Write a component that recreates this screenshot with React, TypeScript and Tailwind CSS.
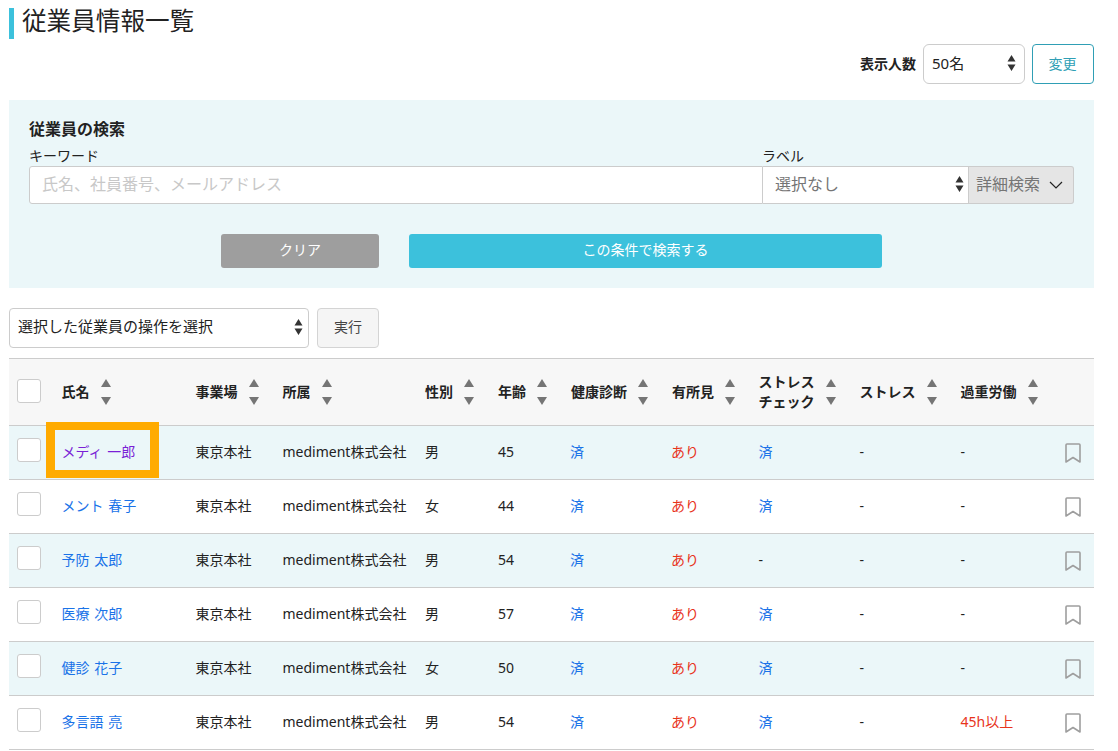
import { ReactNode } from 'react';

interface Employee {
  name: string;
  gender: string;
  age: number;
  stressCheck: string;
  overwork: string;
  visited?: boolean;
}

const employees: Employee[] = [
  { name: 'メディ 一郎', gender: '男', age: 45, stressCheck: '済', overwork: '-', visited: true },
  { name: 'メント 春子', gender: '女', age: 44, stressCheck: '済', overwork: '-' },
  { name: '予防 太郎', gender: '男', age: 54, stressCheck: '-', overwork: '-' },
  { name: '医療 次郎', gender: '男', age: 57, stressCheck: '済', overwork: '-' },
  { name: '健診 花子', gender: '女', age: 50, stressCheck: '済', overwork: '-' },
  { name: '多言語 亮', gender: '男', age: 54, stressCheck: '済', overwork: '45h以上' },
];

function SelectArrows() {
  return (
    <svg width="9" height="18" viewBox="0 0 9 18" className="shrink-0">
      <path d="M4.5 1 L8.5 7.5 H0.5 Z M0.5 10.5 H8.5 L4.5 17 Z" fill="#333" />
    </svg>
  );
}

function SortArrows() {
  return (
    <svg width="10" height="26" viewBox="0 0 10 26" className="shrink-0">
      <path d="M5 0 L10 8 H0 Z M0 18 H10 L5 26 Z" fill="#757575" />
    </svg>
  );
}

function Checkbox({ lift }: { lift: string }) {
  return <div className={`h-6 w-6 rounded-[3px] border border-[#ccc] bg-white ${lift}`} />;
}

function HeaderCell({ children }: { children: ReactNode }) {
  return (
    <th className="p-0 text-left align-middle">
      <div className="flex items-center gap-[11px] text-[14px] font-bold leading-[20px] text-[#222]">
        <span>{children}</span>
        <SortArrows />
      </div>
    </th>
  );
}

function Bookmark() {
  return (
    <svg width="16" height="20" viewBox="0 0 16 20" fill="none" stroke="#9e9e9e" strokeWidth="1.6">
      <path d="M1 2 Q1 1 2 1 H14 Q15 1 15 2 V19 L8 14.5 L1 19 Z" strokeLinejoin="round" />
    </svg>
  );
}

export default function App() {
  return (
    <div className="min-h-[751px] overflow-hidden bg-white pl-[9px] pr-[24px] font-['Noto_Sans','Noto_Sans_CJK_JP',sans-serif] text-[14px] text-[#222]">
      {/* Title */}
      <h1 className="mt-[8px] flex h-[31px] items-center border-l-[5px] border-[#3cc1dc] pb-[6px] pl-[8px] text-[24.6px] font-normal leading-[31px] text-[#222]">
        従業員情報一覧
      </h1>

      {/* Display count */}
      <div className="mt-[5px] flex items-center justify-end">
        <span className="mr-[7px] pb-[2px] text-[14px] font-bold">表示人数</span>
        <div className="flex h-[40px] w-[102px] items-center justify-between rounded-[6px] border border-[#ccc] bg-white pb-[2px] pl-[8px] pr-[8px] text-[15px]">
          50名
          <SelectArrows />
        </div>
        <button className="ml-[7px] h-[40px] w-[62px] rounded-[4px] border border-[#2f9fb5] bg-white pb-[2px] pr-[1px] text-[14px] text-[#2f9fb5]">
          変更
        </button>
      </div>

      {/* Search */}
      <section className="mt-[16px] h-[188px] bg-[#ebf7f9] px-[20px] pt-[18px]">
        <h2 className="text-[16px] font-bold leading-[22px] text-[#222]">従業員の検索</h2>
        <div className="flex">
          <div className="w-[734px]">
            <label className="mt-[8px] block text-[14px] leading-[16px]">キーワード</label>
            <div className="mt-[2px] flex h-[38px] items-center rounded-l-[3px] border border-[#ccc] bg-white pb-[2px] pl-[12px] text-[16px] text-[#c8c8c8]">
              氏名、社員番号、メールアドレス
            </div>
          </div>
          <div className="flex-1">
            <label className="-ml-px mt-[8px] block text-[14px] leading-[16px]">ラベル</label>
            <div className="mt-[2px] flex h-[38px]">
              <div className="flex flex-1 items-center justify-between border border-l-0 border-[#ccc] bg-white pb-[2px] pl-[12px] pr-[4px] text-[16px] text-[#757575]">
                選択なし
                <SelectArrows />
              </div>
              <div className="flex w-[105px] items-center justify-between rounded-r-[3px] border border-l-0 border-[#ccc] bg-[#e5e5e5] pl-[7px] pr-[10px] text-[16px] text-[#757575]">
                <span className="pb-[2px]">詳細検索</span>
                <svg width="14" height="8" viewBox="0 0 14 8" fill="none" stroke="#222" strokeWidth="1.2">
                  <path d="M1 1 L7 7 L13 1" />
                </svg>
              </div>
            </div>
          </div>
        </div>
        <div className="mt-[30px] flex pl-[192px]">
          <button className="h-[34px] w-[158px] rounded-[3px] bg-[#9e9e9e] pb-[3px] text-[14px] text-white">クリア</button>
          <button className="ml-[30px] h-[34px] w-[473px] rounded-[3px] bg-[#3cc1dc] pb-[3px] text-[14px] text-white">
            この条件で検索する
          </button>
        </div>
      </section>

      {/* Bulk action */}
      <div className="mt-[20px] flex">
        <div className="flex h-[40px] w-[300px] items-center justify-between rounded-[4px] border border-[#ccc] bg-white pb-[3px] pl-[8px] pr-[5px] text-[15px]">
          選択した従業員の操作を選択
          <SelectArrows />
        </div>
        <button className="ml-[8px] h-[40px] w-[62px] rounded-[4px] border border-[#d4d4d4] bg-[#f5f5f5] pb-[3px] text-[14px] text-[#444]">
          実行
        </button>
      </div>

      {/* Table */}
      <table className="mt-[10px] w-[1085px] table-fixed border-collapse">
        <colgroup>
          <col className="w-[52.5px]" />
          <col className="w-[134px]" />
          <col className="w-[87px]" />
          <col className="w-[142.5px]" />
          <col className="w-[73px]" />
          <col className="w-[73px]" />
          <col className="w-[101px]" />
          <col className="w-[86.5px]" />
          <col className="w-[101px]" />
          <col className="w-[101px]" />
          <col className="w-[100.5px]" />
          <col className="w-[33px]" />
        </colgroup>
        <thead>
          <tr className="h-[67px] border-y border-[#ccc] bg-[#f7f7f7]">
            <th className="pl-[8px] align-middle">
              <Checkbox lift="mb-[3px]" />
            </th>
            <HeaderCell>氏名</HeaderCell>
            <HeaderCell>事業場</HeaderCell>
            <HeaderCell>所属</HeaderCell>
            <HeaderCell>性別</HeaderCell>
            <HeaderCell>年齢</HeaderCell>
            <HeaderCell>健康診断</HeaderCell>
            <HeaderCell>有所見</HeaderCell>
            <HeaderCell>
              ストレス
              <br />
              チェック
            </HeaderCell>
            <HeaderCell>ストレス</HeaderCell>
            <HeaderCell>過重労働</HeaderCell>
            <th />
          </tr>
        </thead>
        <tbody>
          {employees.map((e, i) => (
            <tr key={e.name} className={`h-[54px] border-b border-[#ccc] ${i % 2 === 0 ? 'bg-[#ebf7f9]' : 'bg-white'}`}>
              <td className="pl-[8px]">
                <Checkbox lift="mb-[5px]" />
              </td>
              <td className="relative pb-[2px]">
                {e.visited && (
                  <div className="absolute left-[-16px] top-[-4px] h-[56px] w-[113px] border-x-[9px] border-y-[8px] border-[#ffab00]" />
                )}
                <a className={`relative [word-spacing:1px] ${e.visited ? 'text-[#7a1fd6]' : 'text-[#1a73e8]'}`}>{e.name}</a>
              </td>
              <td className="pb-[2px]">東京本社</td>
              <td className="pb-[2px]">mediment株式会社</td>
              <td className="pb-[2px]">{e.gender}</td>
              <td className="pb-[2px]">{e.age}</td>
              <td className="pb-[2px] text-[#1a73e8]">
                <span className="-ml-px">済</span>
              </td>
              <td className="pb-[2px] text-[#e8341c]">
                <span className="-ml-px">あり</span>
              </td>
              <td className={`pb-[2px] ${e.stressCheck === '済' ? 'text-[#1a73e8]' : ''}`}>{e.stressCheck}</td>
              <td className="pb-[2px]">-</td>
              <td className={`pb-[2px] ${e.overwork === '-' ? '' : 'text-[#e8341c]'}`}>{e.overwork}</td>
              <td className="pl-[4px] align-middle">
                <Bookmark />
              </td>
            </tr>
          ))}
        </tbody>
      </table>
    </div>
  );
}
